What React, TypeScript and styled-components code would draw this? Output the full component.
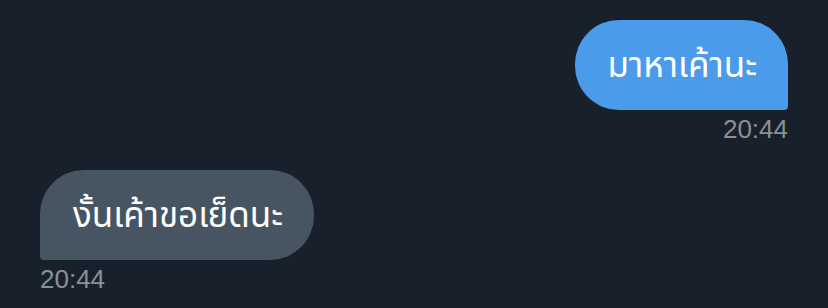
import React from "react";
import styled, { createGlobalStyle } from "styled-components";

const GlobalStyle = createGlobalStyle`
  html, body {
    margin: 0;
    padding: 0;
    background: #18202b;
  }
  body {
    width: 828px;
    height: 308px;
    overflow: hidden;
  }
`;

const Chat = styled.div`
  display: flex;
  flex-direction: column;
  gap: 26px;
  padding: 20px 40px 0;
  font-family: "Noto Sans Thai", "Noto Sans", "DejaVu Sans", sans-serif;
`;

const Group = styled.div<{ $mine: boolean }>`
  display: flex;
  flex-direction: column;
  align-items: ${(p) => (p.$mine ? "flex-end" : "flex-start")};
`;

const Bubble = styled.div<{ $mine: boolean }>`
  display: flex;
  align-items: center;
  height: 90px;
  padding: 2px 31px 0 33px;
  box-sizing: border-box;
  font-size: 35px;
  color: #ffffff;
  background: ${(p) => (p.$mine ? "#4a9be9" : "#475461")};
  border-radius: ${(p) => (p.$mine ? "44px 44px 4px 44px" : "44px 44px 44px 4px")};
`;

const Time = styled.div`
  margin-top: 4px;
  font-family: "Liberation Sans", Arial, sans-serif;
  font-size: 26px;
  line-height: 30px;
  color: #8a9099;
`;

const messages = [
  { text: "มาหาเค้านะ", time: "20:44", mine: true },
  { text: "งั้นเค้าขอเย็ดนะ", time: "20:44", mine: false },
];

export default function App() {
  return (
    <>
      <GlobalStyle />
      <Chat>
        {messages.map((m, i) => (
          <Group key={i} $mine={m.mine}>
            <Bubble $mine={m.mine}>{m.text}</Bubble>
            <Time>{m.time}</Time>
          </Group>
        ))}
      </Chat>
    </>
  );
}
